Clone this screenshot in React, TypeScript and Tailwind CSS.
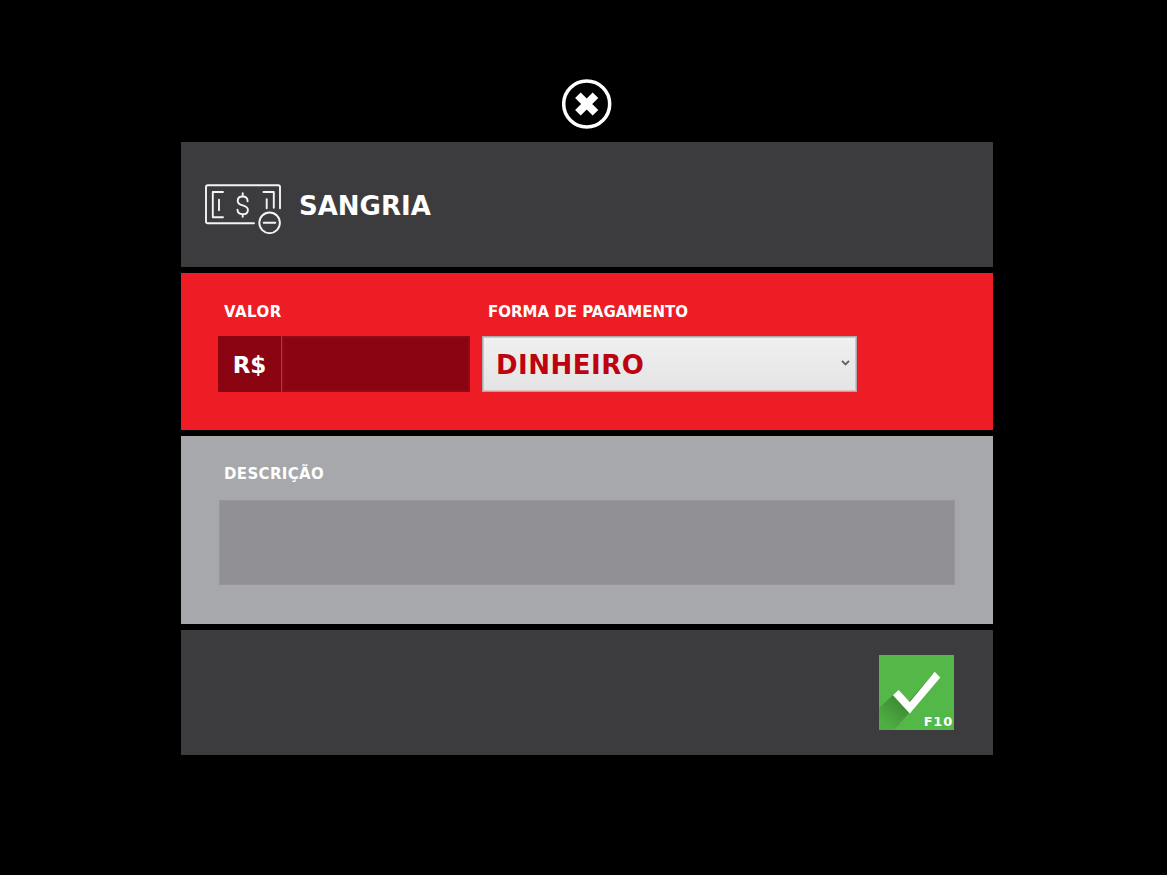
import React, { useState } from 'react';

const CloseIcon: React.FC = () => (
  <svg className="block h-[50px] w-[50px]" viewBox="0 0 50 50" fill="none">
    <circle cx="24.7" cy="25" r="23" stroke="#fff" strokeWidth="3.5" />
    <path d="M15.9 16.2l17.6 17.6M33.5 16.2L15.9 33.8" stroke="#fff" strokeWidth="7.9" />
  </svg>
);

const CashOutIcon: React.FC = () => (
  <svg className="block h-[52px] w-[78px]" viewBox="0 0 78 52" fill="none" stroke="#f4f4f4" strokeWidth="1.9" strokeLinecap="round" strokeLinejoin="round">
    <path d="M50 41.3H3.8A1.8 1.8 0 0 1 2 39.5V5.1a1.8 1.8 0 0 1 1.8-1.8h70.4A1.8 1.8 0 0 1 76 5.1V26.3" />
    <path d="M19 10H8.8v25.3H19M59.5 10h10.3V25.8" />
    <path d="M15 17.8v10.5M62.7 17.3V26.3" />
    <path d="M43.6 19.2c0-3.1-2.1-4.7-5-4.7s-4.9 1.7-4.9 4.4c0 6.2 10.2 2.8 10.2 9 0 2.9-2.3 4.3-5.2 4.3s-5.2-1.5-5.2-4.4M38.7 11.3v3.2M38.7 32.2V34.8" />
    <circle cx="65.6" cy="40.8" r="10.3" />
    <path d="M59.7 40.7H71.3" />
  </svg>
);

const CheckIcon: React.FC = () => (
  <svg className="block h-[75px] w-[75px]" viewBox="0 0 75 75">
    <defs>
      <linearGradient id="shade" x1="36" y1="36" x2="8" y2="70" gradientUnits="userSpaceOnUse">
        <stop offset="0" stopColor="#34752d" />
        <stop offset="1" stopColor="#4eae43" />
      </linearGradient>
    </defs>
    <rect width="75" height="75" fill="#54b848" />
    <path d="M14.2 40L0 53v22h15l15.5-17.5L60 22.5 55.5 17 30.5 46z" fill="url(#shade)" />
    <path d="M14 40.2l5.6-5.1 11.2 12L55.7 16.8l5.6 5.7-30.5 36z" fill="#fff" />
  </svg>
);

const Label: React.FC<{ children: React.ReactNode }> = ({ children }) => (
  <span className="block h-5 pl-[6px] text-[15px] leading-5 whitespace-nowrap">{children}</span>
);

export default function App() {
  const [value, setValue] = useState('');
  const [description, setDescription] = useState('');

  return (
    <div className="flex h-[875px] w-full flex-col items-center overflow-hidden bg-black pt-[79px] pl-[7px] font-['DejaVu_Sans',sans-serif] font-bold text-white">
      <button type="button" aria-label="Fechar">
        <CloseIcon />
      </button>

      <div className="mt-[13px] flex w-[812px] flex-col gap-[6px]">
        {/* Title */}
        <header className="flex h-[125px] items-center bg-[#3c3c3e] pt-[7px] pl-[23px]">
          <CashOutIcon />
          <h1 className="ml-[17px] -mt-[5px] text-[26px] leading-8">SANGRIA</h1>
        </header>

        {/* Amount and payment method */}
        <section className="flex h-[157px] gap-3 bg-[#ee1c25] pt-[29px] pl-[37px]">
          <div className="w-[252px]">
            <div className="tracking-[0.45px]">
              <Label>VALOR</Label>
            </div>
            <div className="mt-[14px] flex h-[56px] gap-px">
              <span className="flex w-[63px] items-center justify-center bg-[#8a0511] pt-px text-[23px] leading-8">R$</span>
              <input
                className="w-[188px] border-2 border-[#94091a] bg-[#8a0511] px-3 text-[23px] outline-none"
                value={value}
                onChange={(e) => setValue(e.target.value)}
              />
            </div>
          </div>
          <div className="w-[375px]">
            <Label>FORMA DE PAGAMENTO</Label>
            <button
              type="button"
              className="mt-[14px] flex h-[56px] w-full items-center justify-between border border-[#aba9aa] bg-linear-to-b from-[#f0f0f0] to-[#e4e4e4] pr-[6px] pl-[13px] shadow-[inset_0_0_0_1px_#dfc0c1]"
            >
              <span className="pt-[2px] text-[26px] leading-8 tracking-[0.5px] text-[#bd0310]">DINHEIRO</span>
              <svg className="-mt-[2px] h-[8px] w-[10px]" viewBox="0 0 10 8" fill="none">
                <path d="M2 1.8l3.5 3.5L9 1.8" stroke="#606060" strokeWidth="1.9" />
              </svg>
            </button>
          </div>
        </section>

        {/* Description */}
        <section className="h-[188px] bg-[#a6a8ab] pt-[28px] pl-[38px]">
          <div className="-ml-px tracking-[0.35px]">
            <Label>DESCRIÇÃO</Label>
          </div>
          <textarea
            className="mt-[16px] block h-[85px] w-[736px] resize-none border border-[#96959a] bg-[#919095] p-3 text-[15px] outline-none"
            value={description}
            onChange={(e) => setDescription(e.target.value)}
          />
        </section>

        <footer className="flex h-[125px] items-center justify-end bg-[#3c3c3e] pr-[39px]">
          <button type="button" aria-label="Confirmar" className="relative">
            <CheckIcon />
            <span className="absolute right-[1px] bottom-0 text-[13px] leading-4 tracking-[0.8px]">F10</span>
          </button>
        </footer>
      </div>
    </div>
  );
}
